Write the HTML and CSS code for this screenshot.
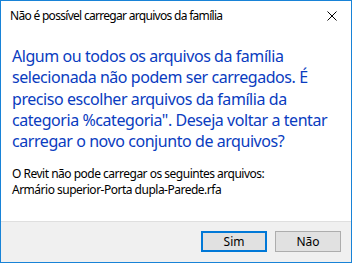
FILE: index.html
```html
<!DOCTYPE html>
<html lang="pt">
<head>
<meta charset="utf-8">
<link rel="stylesheet" href="styles.css">
</head>
<body>
<div class="dialog">
  <div class="titlebar">
    <span class="title">Não é possível carregar arquivos da família</span>
    <span class="close"><svg width="10" height="10" viewBox="0 0 10 10"><path d="M0.5 0.5 L9.5 9.5 M9.5 0.5 L0.5 9.5" stroke="#000" stroke-width="1" fill="none"/></svg></span>
  </div>
  <div class="content">
    <p class="main">Algum ou todos os arquivos da família<br>selecionada não podem ser carregados. É<br>preciso escolher arquivos da família da<br>categoria %categoria". Deseja voltar a tentar<br>carregar o novo conjunto de arquivos?</p>
    <p class="detail">O Revit não pode carregar os seguintes arquivos:<br>Armário superior-Porta dupla-Parede.rfa</p>
  </div>
  <div class="footer">
    <button class="btn btn-default">Sim</button>
    <button class="btn">Não</button>
  </div>
</div>
</body>
</html>
```
FILE: styles.css
```css
html, body {
  margin: 0;
  padding: 0;
  background: #fff;
}
.dialog {
  width: 352px;
  height: 263px;
  box-sizing: border-box;
  border: 1px solid #1883d7;
  display: flex;
  flex-direction: column;
  font-family: "Noto Sans", "Liberation Sans", sans-serif;
  background: #fff;
}
.titlebar {
  height: 29px;
  display: flex;
  align-items: center;
  justify-content: space-between;
  padding: 0 9px 0 9px;
  flex: none;
}
.title {
  font-size: 12px;
  letter-spacing: -0.7px;
  white-space: nowrap;
  color: #000;
}
.close {
  display: flex;
  width: 10px;
  height: 10px;
  margin-right: 5px;
}
.content {
  flex: 1;
  min-height: 0;
  overflow: hidden;
  padding: 0 10px 0 11px;
}
.main {
  margin: 16px 0 0 0;
  font-size: 16px;
  line-height: 21.3px;
  letter-spacing: -0.44px;
  white-space: nowrap;
  color: #0a3cc0;
}
.detail {
  margin: 14px 0 0 0;
  font-size: 12px;
  line-height: 16px;
  letter-spacing: -0.5px;
  white-space: nowrap;
  color: #000;
}
.footer {
  flex: none;
  box-sizing: border-box;
  height: 41px;
  background: #f0f0f0;
  border-top: 1px solid #dfdfdf;
  display: flex;
  justify-content: flex-end;
  align-items: flex-start;
  gap: 8px;
  padding: 9px 10px 0 0;
}
.btn {
  width: 66px;
  height: 21px;
  box-sizing: border-box;
  border: 1px solid #adadad;
  background: #e1e1e1;
  font-family: "Noto Sans", "Liberation Sans", sans-serif;
  font-size: 12px;
  color: #000;
  padding: 0;
  margin: 0;
}
.btn-default {
  border: 2px solid #0078d7;
}
```
